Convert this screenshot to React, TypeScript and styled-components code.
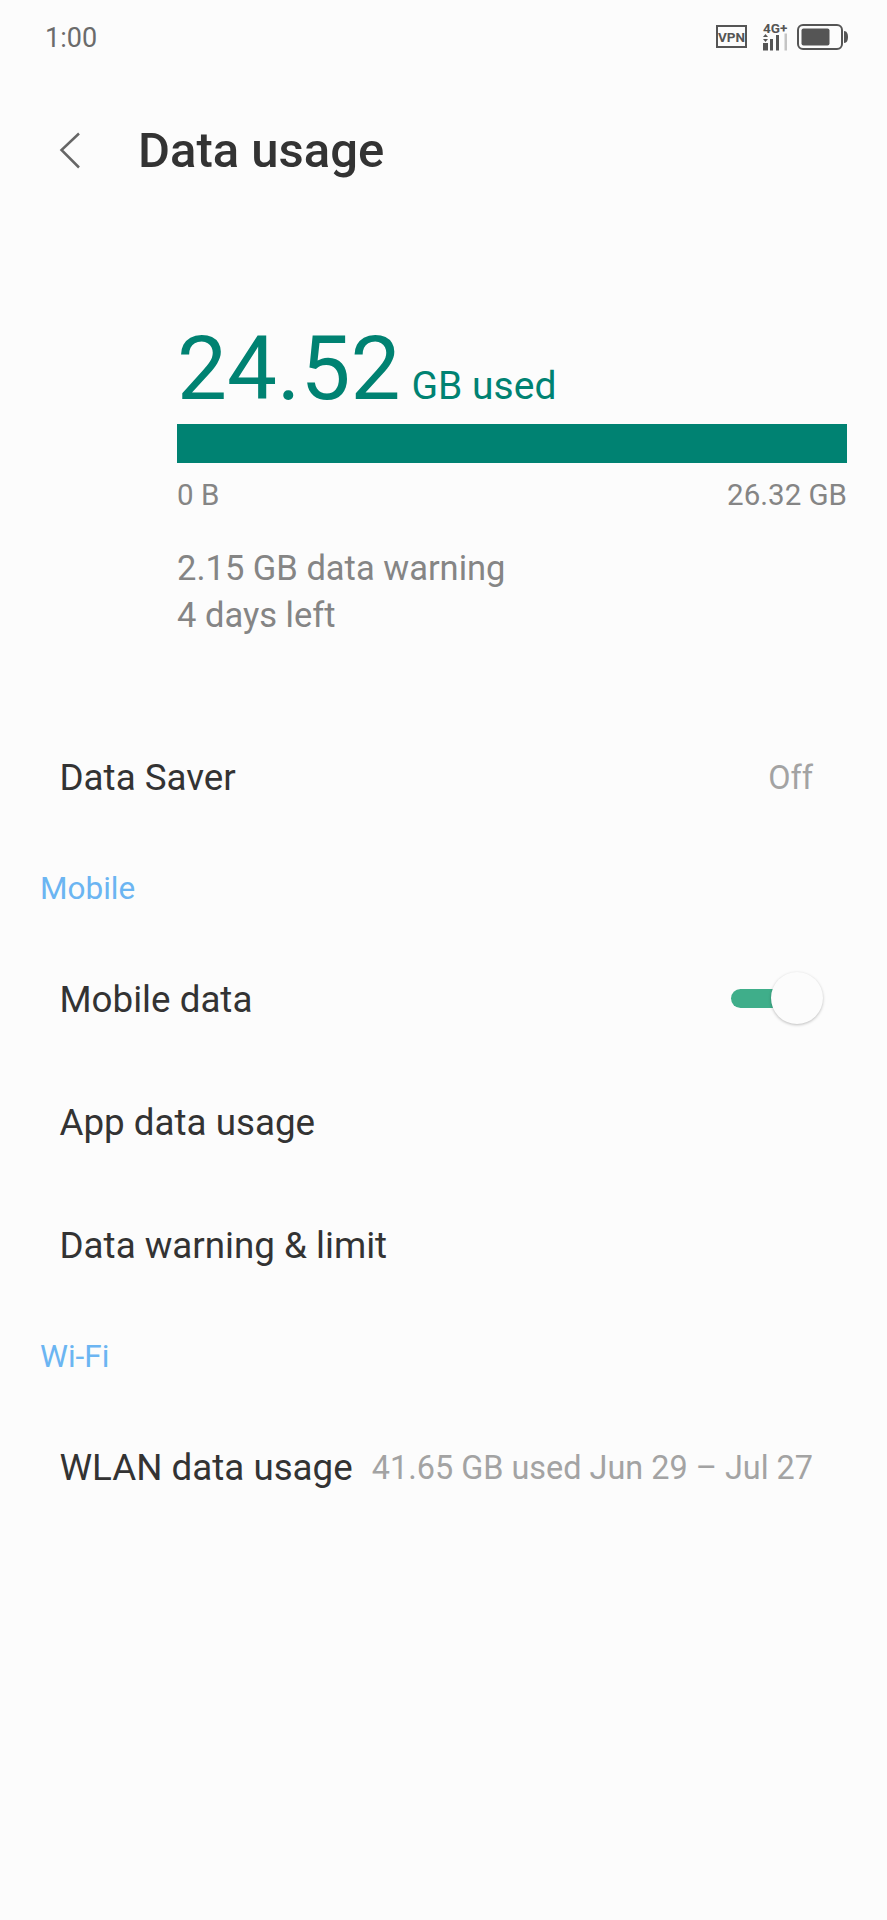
import React from "react";
import styled, { createGlobalStyle } from "styled-components";

const Global = createGlobalStyle`
  html, body { margin: 0; padding: 0; background: #fcfcfc; }
  body { font-family: Roboto, "Liberation Sans", sans-serif; }
`;

const Screen = styled.div`
  width: 887px;
  height: 1920px;
  background: #fcfcfc;
  display: flex;
  flex-direction: column;
  overflow: hidden;
`;

const StatusBar = styled.div`
  height: 76px;
  box-sizing: border-box;
  padding: 0 39px 0 45px;
  display: flex;
  align-items: center;
  justify-content: space-between;
`;

const Clock = styled.span`
  font-size: 27px;
  color: #6b6b6b;
`;

const StatusIcons = styled.div`
  display: flex;
  align-items: center;
  gap: 8px;
  margin-top: -3px;
`;

const VpnSvg = styled.svg`
  margin-right: 7px;
`;

const BackSvg = styled.svg`
  flex: none;
`;

const Header = styled.div`
  height: 148px;
  box-sizing: border-box;
  padding: 0 0 0 59px;
  display: flex;
  align-items: center;
  gap: 58px;
`;

const Title = styled.h1`
  margin: 0;
  font-size: 49px;
  font-weight: 500;
  color: #333333;
`;

const Summary = styled.section`
  box-sizing: border-box;
  padding: 95px 40px 0 177px;
  display: flex;
  flex-direction: column;
`;

const UsedLine = styled.div`
  display: flex;
  align-items: baseline;
  gap: 11px;
  color: #008272;
`;

const UsedValue = styled.span`
  font-size: 89px;
  line-height: 100px;
`;

const UsedUnit = styled.span`
  font-size: 39px;
  line-height: 39px;
`;

const Track = styled.div`
  height: 39px;
  margin-top: 5px;
  background: #008272;
`;

const Scale = styled.div`
  display: flex;
  justify-content: space-between;
  font-size: 29.5px;
  color: #858585;
  margin-top: 15px;
`;

const Note = styled.div`
  font-size: 34.5px;
  line-height: 46.5px;
  color: #858585;
`;

const Notes = styled.div`
  margin-top: 33px;
`;

const List = styled.div`
  margin-top: 78px;
`;

const Row = styled.div`
  height: 123px;
  box-sizing: border-box;
  padding: 0 74px 0 59.5px;
  display: flex;
  align-items: center;
  justify-content: space-between;
`;

const RowLabel = styled.span`
  font-size: 36.75px;
  color: #333333;
`;

const RowValue = styled.span`
  font-size: 32.4px;
  color: #a3a3a3;
`;

const SectionLabel = styled.div`
  height: 99px;
  padding-left: 40px;
  font-size: 31.5px;
  line-height: 99px;
  color: #6bb5f2;
`;

const Switch = styled.div`
  position: relative;
  width: 92px;
  height: 52px;
  margin: -4px -10px 0 0;
`;

const SwitchTrack = styled.div`
  position: absolute;
  left: 0;
  top: 17px;
  width: 50px;
  height: 19px;
  border-radius: 9.5px 0 0 9.5px;
  background: #3fae8a;
`;

const SwitchThumb = styled.div`
  position: absolute;
  right: 0;
  top: 0;
  width: 52px;
  height: 52px;
  border-radius: 50%;
  background: #fcfcfc;
  box-shadow: 0 1px 3px rgba(0, 0, 0, 0.25);
`;

const VpnIcon = () => (
  <VpnSvg width="31" height="23" viewBox="0 0 31 23">
    <rect x="1" y="1" width="29" height="21" fill="none" stroke="#555" strokeWidth="2" />
    <text x="15.5" y="16.5" fontSize="13.5" fontWeight="700" fontFamily="Roboto, sans-serif" textAnchor="middle" fill="#555">VPN</text>
  </VpnSvg>
);

const SignalIcon = () => (
  <svg width="27" height="36" viewBox="0 -4 27 36">
    <text x="1" y="10" fontSize="13.5" fontWeight="700" fontFamily="Roboto, sans-serif" fill="#555">4G+</text>
    <g fill="#555">
      <path d="M3.5 11l2.5 3H1z" />
      <path d="M3.5 19l2.5-3H1z" />
      <rect x="1" y="20" width="5" height="7.5" />
      <rect x="8" y="16" width="3" height="11.5" />
      <rect x="14" y="12" width="3" height="15.5" />
    </g>
    <rect x="22.5" y="10.5" width="2.5" height="17" fill="#c4c4c4" />
  </svg>
);

const BatteryIcon = () => (
  <svg width="51" height="26" viewBox="0 0 51 26">
    <rect x="1" y="1" width="44" height="24" rx="5" fill="none" stroke="#555" strokeWidth="2" />
    <rect x="4.5" y="4.5" width="28" height="17" rx="2" fill="#555" />
    <path d="M47 7c3 0 4 3 4 6s-1 6-4 6z" fill="#555" />
  </svg>
);

const BackIcon = () => (
  <BackSvg width="21" height="37" viewBox="0 0 21 37">
    <path d="M20 1.5L2.5 18l17.5 17.5" fill="none" stroke="#666" strokeWidth="2.5" />
  </BackSvg>
);

export default function App() {
  return (
    <Screen>
      <Global />
      <StatusBar>
        <Clock>1:00</Clock>
        <StatusIcons>
          <VpnIcon />
          <SignalIcon />
          <BatteryIcon />
        </StatusIcons>
      </StatusBar>
      <Header>
        <BackIcon />
        <Title>Data usage</Title>
      </Header>
      <Summary>
        <UsedLine>
          <UsedValue>24.52</UsedValue>
          <UsedUnit>GB used</UsedUnit>
        </UsedLine>
        <Track />
        <Scale>
          <span>0 B</span>
          <span>26.32 GB</span>
        </Scale>
        <Notes>
          <Note>2.15 GB data warning</Note>
          <Note>4 days left</Note>
        </Notes>
      </Summary>
      <List>
        <Row>
          <RowLabel>Data Saver</RowLabel>
          <RowValue>Off</RowValue>
        </Row>
        <SectionLabel>Mobile</SectionLabel>
        <Row>
          <RowLabel>Mobile data</RowLabel>
          <Switch>
            <SwitchTrack />
            <SwitchThumb />
          </Switch>
        </Row>
        <Row>
          <RowLabel>App data usage</RowLabel>
        </Row>
        <Row>
          <RowLabel>Data warning &amp; limit</RowLabel>
        </Row>
        <SectionLabel>Wi-Fi</SectionLabel>
        <Row>
          <RowLabel>WLAN data usage</RowLabel>
          <RowValue>41.65 GB used Jun 29 – Jul 27</RowValue>
        </Row>
      </List>
    </Screen>
  );
}
